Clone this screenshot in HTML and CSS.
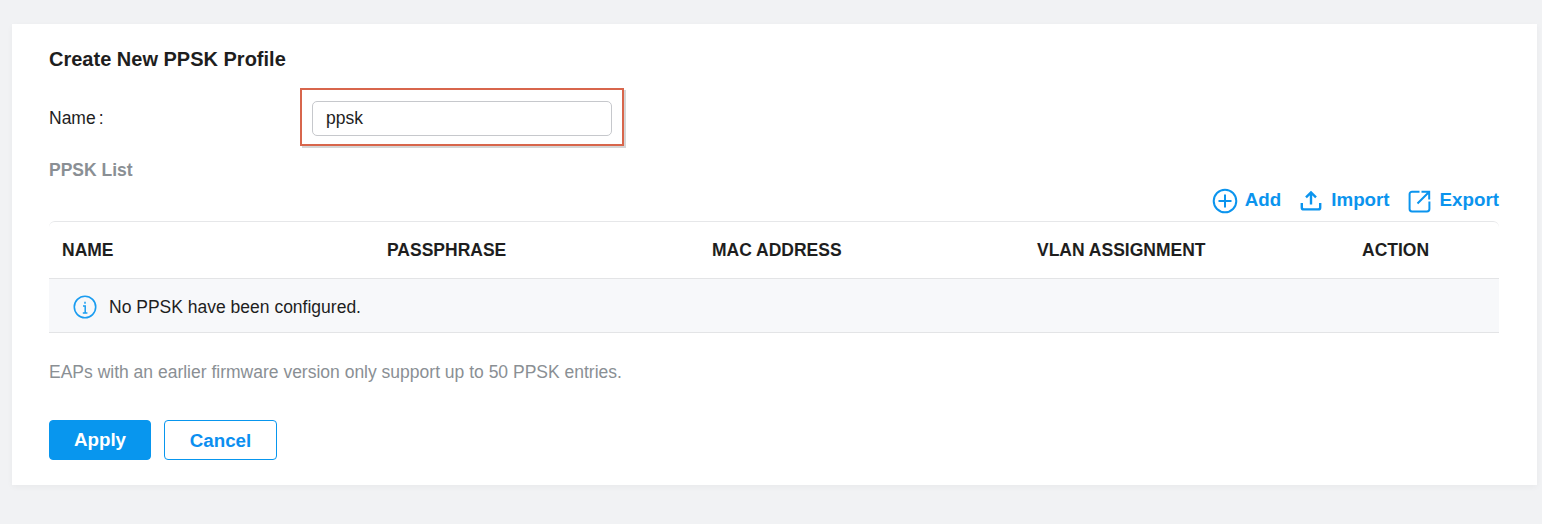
FILE: index.html
```html
<!DOCTYPE html>
<html lang="en">
<head>
<meta charset="utf-8">
<title>Create New PPSK Profile</title>
<link rel="stylesheet" href="styles.css">
</head>
<body>
<main class="card">
  <h1 class="title">Create New PPSK Profile</h1>
  <div class="name-row">
    <label class="name-label" for="name">Name<span class="colon">:</span></label>
    <div class="highlight">
      <input class="name-input" id="name" type="text" value="ppsk">
    </div>
  </div>
  <h2 class="subtitle">PPSK List</h2>
  <div class="toolbar">
    <a class="tool tool-add">
      <svg class="icon-low" width="26" height="26" viewBox="0 0 26 26" fill="none" stroke="currentColor" stroke-width="2"><circle cx="13" cy="13" r="11.3"/><path d="M6.5 13h13M13 6.5v13"/></svg>
      Add</a>
    <a class="tool tool-import">
      <svg width="22" height="22" viewBox="0 0 22 22" fill="none" stroke="currentColor" stroke-width="2.4"><path d="M11 15.5V4M6 8.4 11 3.4l5 5"/><path d="M1.8 14v4.4a2 2 0 0 0 2 2h14.4a2 2 0 0 0 2-2V14"/></svg>
      Import</a>
    <a class="tool tool-export">
      <svg class="icon-low" width="23" height="23" viewBox="0 0 23 23" fill="none" stroke="currentColor" stroke-width="2"><path d="M11.5 1.7H4a2.4 2.4 0 0 0-2.4 2.4v15A2.4 2.4 0 0 0 4 21.500h15a2.400 2.400 0 0 0 2.400-2.400V11.500"/><path d="M9.500 13.500 20.500 2.500M13.500 1.800h7.700v7.700"/></svg>
      Export</a>
  </div>
  <div class="table">
    <div class="thead">
      <div class="th">NAME</div>
      <div class="th">PASSPHRASE</div>
      <div class="th">MAC ADDRESS</div>
      <div class="th">VLAN ASSIGNMENT</div>
      <div class="th">ACTION</div>
    </div>
    <div class="empty">
      <svg width="24" height="24" viewBox="0 0 24 24" fill="none"><circle cx="12" cy="12" r="10.7" stroke="#1a9cf0" stroke-width="1.6"/><path d="M12 6.800v2M10 11h2.200v7M9.800 18h4.600" stroke="#1a9cf0" stroke-width="1.500"/></svg>
      <span>No PPSK have been configured.</span>
    </div>
  </div>
  <p class="note">EAPs with an earlier firmware version only support up to 50 PPSK entries.</p>
  <div class="actions">
    <button class="btn btn-primary" type="button">Apply</button>
    <button class="btn btn-secondary" type="button">Cancel</button>
  </div>
</main>
</body>
</html>
```

FILE: styles.css
```css
* { box-sizing: border-box; }
html, body { height: 100%; }
body {
  margin: 0;
  padding: 24px 5px 0 12px;
  background: #f1f2f4;
  font-family: "Liberation Sans", Arial, sans-serif;
  color: #1e1e1e;
  overflow: hidden;
}
.card {
  height: 461px;
  background: #fff;
  padding: 24px 38px 0 37px;
  box-shadow: 0 2px 6px rgba(0, 0, 0, 0.04);
}
.title {
  margin: 0;
  font-size: 20px;
  line-height: 22px;
  font-weight: 700;
}
.name-row {
  display: flex;
  align-items: center;
  margin-top: 18px;
}
.name-label {
  width: 251px;
  padding-top: 2px;
  font-size: 17.5px;
}
.colon { margin-left: 3px; }
.highlight {
  width: 324px;
  height: 58px;
  padding: 11px 11px 0 10px;
  border: 2px solid #d8664c;
  box-shadow: 2px 2px 0 rgba(0, 0, 0, 0.16);
}
.name-input {
  display: block;
  width: 300px;
  height: 35px;
  padding: 0 13px;
  border: 1px solid #c6c8cc;
  border-radius: 5px;
  font: 17.5px "Liberation Sans", Arial, sans-serif;
  color: #1e1e1e;
  outline: none;
}
.subtitle {
  margin: 14px 0 0;
  font-size: 17.5px;
  line-height: 20px;
  font-weight: 700;
  color: #8a8f94;
}
.toolbar {
  display: flex;
  justify-content: flex-end;
  align-items: center;
  gap: 18px;
  height: 26px;
  margin-top: 7px;
}
.tool {
  display: flex;
  align-items: center;
  gap: 9px;
  color: #0b94ee;
  font-size: 18.75px;
  font-weight: 700;
}
.tool-add { gap: 7px; margin-right: 1px; }
.icon-low { margin-top: 2px; }
.table {
  margin-top: 8px;
  border-top: 1px solid #e6e7e9;
  border-radius: 6px 6px 0 0;
}
.thead {
  display: grid;
  grid-template-columns: repeat(4, 325px) 1fr;
  align-items: center;
  height: 57px;
  border-bottom: 1px solid #e3e4e6;
}
.th {
  padding-left: 13px;
  font-size: 17.5px;
  font-weight: 700;
}
.empty {
  display: flex;
  align-items: center;
  gap: 12px;
  height: 54px;
  padding: 3px 0 0 24px;
  background: #f7f8fa;
  border-bottom: 1px solid #e3e4e6;
  font-size: 17.5px;
}
.note {
  margin: 28px 0 0;
  font-size: 17.5px;
  line-height: 22px;
  color: #8a8f94;
}
.actions {
  display: flex;
  gap: 13px;
  margin-top: 37px;
}
.btn {
  height: 40px;
  border-radius: 4px;
  font: 700 18.75px "Liberation Sans", Arial, sans-serif;
  padding: 0;
}
.btn-primary {
  width: 102px;
  background: #0896ee;
  border: 1px solid #0896ee;
  color: #fff;
}
.btn-secondary {
  width: 113px;
  padding-top: 2px;
  background: #fff;
  border: 1px solid #0896ee;
  color: #0b8ff0;
}
```
